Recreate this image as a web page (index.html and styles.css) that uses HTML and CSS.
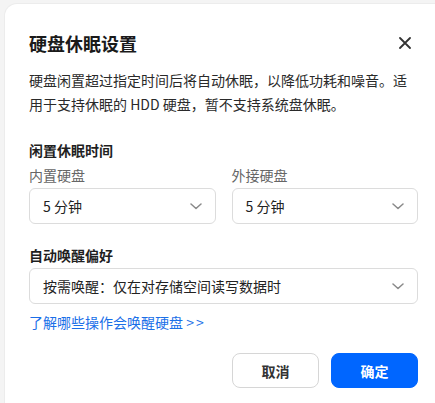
FILE: index.html
```html
<!DOCTYPE html>
<html lang="zh-CN">
<head>
<meta charset="utf-8">
<link rel="stylesheet" href="styles.css">
</head>
<body>
<div class="dialog">
  <div class="header">
    <h1 class="title">硬盘休眠设置</h1>
    <button class="close" aria-label="关闭">
      <svg width="12" height="12" viewBox="0 0 12 12"><path d="M1 1L11 11M11 1L1 11" stroke="#333" stroke-width="1.8" stroke-linecap="round"/></svg>
    </button>
  </div>
  <p class="desc">硬盘闲置超过指定时间后将自动休眠，以降低功耗和噪音。适用于支持休眠的 HDD 硬盘，暂不支持系统盘休眠。</p>

  <div class="section-label">闲置休眠时间</div>
  <div class="row">
    <div class="field">
      <div class="sub-label">内置硬盘</div>
      <div class="select"><span>5 分钟</span><svg class="chev" width="12" height="7" viewBox="0 0 12 7"><path d="M1 1L6 5.5L11 1" fill="none" stroke="#8a8a8a" stroke-width="1.5" stroke-linecap="round" stroke-linejoin="round"/></svg></div>
    </div>
    <div class="field">
      <div class="sub-label">外接硬盘</div>
      <div class="select"><span>5 分钟</span><svg class="chev" width="12" height="7" viewBox="0 0 12 7"><path d="M1 1L6 5.5L11 1" fill="none" stroke="#8a8a8a" stroke-width="1.5" stroke-linecap="round" stroke-linejoin="round"/></svg></div>
    </div>
  </div>

  <div class="section-label second">自动唤醒偏好</div>
  <div class="select full"><span>按需唤醒：仅在对存储空间读写数据时</span><svg class="chev" width="12" height="7" viewBox="0 0 12 7"><path d="M1 1L6 5.5L11 1" fill="none" stroke="#8a8a8a" stroke-width="1.5" stroke-linecap="round" stroke-linejoin="round"/></svg></div>
  <a class="link" href="#">了解哪些操作会唤醒硬盘 <span class="arrows">&gt;&gt;</span></a>

  <div class="footer">
    <button class="btn cancel">取消</button>
    <button class="btn ok">确定</button>
  </div>
</div>
</body>
</html>
```

FILE: styles.css
```css
html, body {
  margin: 0;
  padding: 0;
}
body {
  background: #f4f4f4;
  width: 435px;
  height: 403px;
  overflow: hidden;
  font-family: "Noto Sans CJK SC", "Noto Sans", sans-serif;
  color: #222;
}
.dialog {
  box-sizing: border-box;
  margin: 4px 0 0 5px;
  width: 430px;
  height: 399px;
  padding: 26px 17px 0 24px;
  background: #fff;
  border-top-left-radius: 12px;
  box-shadow: 0 0 0 1px #ececec;
}
.header {
  display: flex;
  align-items: center;
  justify-content: space-between;
  height: 26px;
  width: 389px;
}
.title {
  margin: 0;
  font-size: 18px;
  line-height: 26px;
  font-weight: 700;
  color: #1a1a1a;
}
.close {
  border: 0;
  background: none;
  padding: 0;
  width: 12px;
  height: 12px;
  margin-right: 7px;
  display: flex;
}
.desc {
  margin: 12px 0 0 0;
  font-size: 14px;
  line-height: 24px;
  color: #2a2a2a;
  width: 389px;
}
.section-label {
  margin-top: 23px;
  font-size: 14px;
  line-height: 22px;
  font-weight: 700;
  color: #1f1f1f;
}
.section-label.second {
  margin-top: 20px;
}
.row {
  display: flex;
  gap: 16px;
  width: 389px;
  margin-top: 3px;
}
.field {
  flex: 1;
}
.sub-label {
  font-size: 14px;
  line-height: 22px;
  color: #666;
  margin-bottom: 2px;
}
.select {
  box-sizing: border-box;
  height: 36px;
  border: 1px solid #dcdcdc;
  border-radius: 6px;
  display: flex;
  align-items: center;
  justify-content: space-between;
  padding: 0 13px 0 13px;
  font-size: 14px;
  color: #222;
}
.select.full {
  width: 389px;
  margin-top: 2px;
}
.chev {
  display: block;
}
.link {
  display: block;
  margin-top: 7px;
  font-size: 14px;
  line-height: 22px;
  color: #1a6fe8;
  text-decoration: none;
}
.arrows {
  letter-spacing: 2px;
}
.footer {
  display: flex;
  justify-content: flex-end;
  gap: 12px;
  width: 389px;
  margin-top: 20px;
}
.btn {
  box-sizing: border-box;
  width: 87px;
  height: 35px;
  border-radius: 8px;
  font-family: "Noto Sans CJK SC", "Noto Sans", sans-serif;
  font-size: 14px;
  font-weight: 700;
  padding: 0;
}
.cancel {
  background: #fff;
  border: 1px solid #d6d6d6;
  color: #333;
}
.ok {
  background: #0066ff;
  border: 1px solid #0066ff;
  color: #fff;
}
```
